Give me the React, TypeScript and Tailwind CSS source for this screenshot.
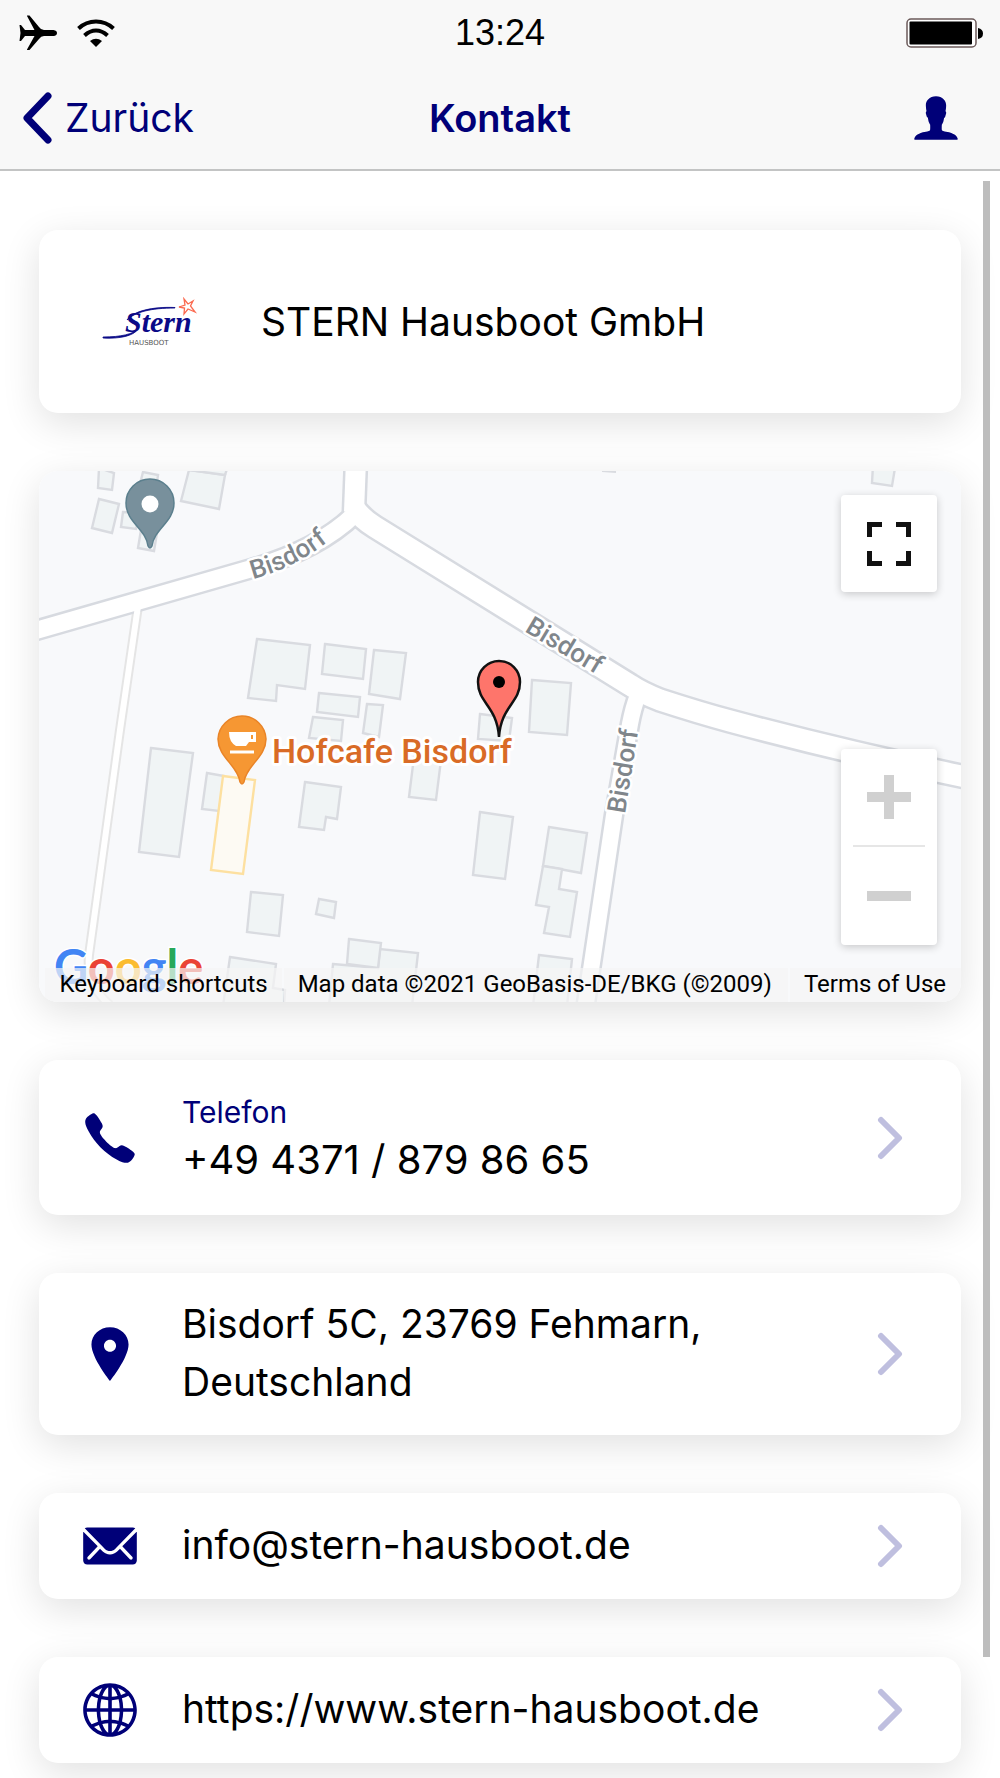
import React from "react";
import { IoIosCall, IoIosGlobe, IoIosMail, IoIosPerson, IoIosPin } from "react-icons/io";

const CARD = "rounded-[19px] bg-white shadow-[0_10px_38px_rgba(0,0,0,0.12)]";

const BUILDINGS = [
  "99,468 114,473 112,490 98,488",
  "99,499 119,504 112,533 92,528",
  "123,512 140,513 136,529 121,527",
  "143,472 158,475 157,482 141,480",
  "141,530 157,533 154,551 138,548",
  "189,470 225,475 219,509 181,501",
  "185,460 228,466 225,475 189,470",
  "257,639 310,645 305,689 277,685 276,701 248,698",
  "325,644 366,649 363,679 322,674",
  "319,693 360,697 358,717 317,712",
  "313,717 343,720 341,741 309,738",
  "374,650 406,653 400,699 369,694",
  "367,704 383,705 379,737 363,733",
  "480,714 512,718 509,741 478,739",
  "532,680 571,683 567,735 529,732",
  "873,465 895,468 892,486 872,483",
  "151,748 193,753 179,857 139,852",
  "207,773 224,776 219,811 202,809",
  "305,782 341,787 337,819 326,817 324,830 299,827",
  "251,892 283,895 279,936 247,932",
  "319,899 336,902 334,918 316,914",
  "230,957 276,964 273,988 285,990 284,1006 223,1006",
  "333,964 378,968 380,949 418,953 412,1006 329,1006",
  "349,939 381,943 378,968 347,964",
  "414,757 441,760 436,800 409,797",
  "480,812 513,817 505,879 473,875",
  "549,827 587,833 581,873 543,866",
  "543,866 562,869 559,889 577,892 570,937 544,933 549,907 536,905",
  "539,955 572,959 567,1006 533,1006",
];

const ROADS = [
  { d: "M20 635L250 569Q318 550 355 514", w: 17 },
  { d: "M356 460L354 512", w: 20 },
  { d: "M354 508Q362 519 375 527L630 685Q642 693 660 700Q700 713 730 721Q845 752 980 780", w: 21 },
  { d: "M638 695Q633 708 630 724L614 815L585 1010", w: 16 },
];

const LANE = "M138 606L120 730L89 955Q86 985 110 1005";

function MapDrawing() {
  return (
    <svg viewBox="39 471 922 531" className="block h-auto w-full" role="img" aria-label="Karte Bisdorf">
      <rect x="39" y="471" width="922" height="532" fill="#f8f9fb" />
      <g fill="#f0f4f5" stroke="#d9dbe0" strokeWidth="2.4">
        {BUILDINGS.map((points) => (
          <polygon key={points} points={points} />
        ))}
      </g>
      <path d="M602 471L616 472" stroke="#d9dbe0" strokeWidth="2" />
      <polygon points="223,776 255,780 243,874 211,870" fill="#fdfaf3" stroke="#fde0a0" strokeWidth="2.4" />
      <path d={LANE} fill="none" stroke="#e5e5e5" strokeWidth="10" />
      <g fill="none" stroke="#d7dae0">
        {ROADS.map((r) => (
          <path key={r.d} d={r.d} strokeWidth={r.w + 5} />
        ))}
      </g>
      <path d={LANE} fill="none" stroke="#fff" strokeWidth="6" />
      <g fill="none" stroke="#fff">
        {ROADS.map((r) => (
          <path key={r.d} d={r.d} strokeWidth={r.w} />
        ))}
      </g>

      <g
        className="font-['Roboto'] text-[26px] font-medium"
        fill="#80868b"
        stroke="#fff"
        strokeWidth="5"
        strokeLinejoin="round"
        paintOrder="stroke"
      >
        <path id="street-curve" d="M253 579Q302 566 342 530" fill="none" stroke="none" />
        <text>
          <textPath href="#street-curve">Bisdorf</textPath>
        </text>
        <text transform="translate(524 631) rotate(31)">Bisdorf</text>
        <text transform="translate(625 814) rotate(-81)">Bisdorf</text>
      </g>

      <path
        d="M150 479A24 24 0 0 0 126 503C126 522 146 529 148 546Q150 550 152 546C154 529 174 522 174 503A24 24 0 0 0 150 479Z"
        fill="#78909c"
        stroke="#5b7f8d"
        strokeWidth="1.5"
      />
      <circle cx="150" cy="504" r="8.5" fill="#fff" />

      <path
        d="M242 716A24 24 0 0 0 218 739C218 757 238 766 240 782Q242 786 244 782C246 766 266 757 266 739A24 24 0 0 0 242 716Z"
        fill="#f69733"
        stroke="#e98427"
        strokeWidth="1.5"
      />
      <path d="M229 732H256V742H249L246 746H236Q229 742 229 732ZM251 735V739H253V735Z" fill="#fff" fillRule="evenodd" />
      <path d="M230 752H254" stroke="#fff" strokeWidth="3" />

      <text
        x="272"
        y="763"
        className="font-['Roboto'] text-[34px] font-medium"
        fill="#d96b26"
        stroke="#fff"
        strokeWidth="6"
        strokeLinejoin="round"
        paintOrder="stroke"
      >
        Hofcafe Bisdorf
      </text>

      <path
        d="M499 661A21 21 0 0 0 478 682C478 703 497 706 499 737C501 706 520 703 520 682A21 21 0 0 0 499 661Z"
        fill="#fe756b"
        stroke="#111"
        strokeWidth="2.5"
      />
      <circle cx="499" cy="682" r="6" fill="#000" />

      <text
        x="54"
        y="984"
        className="font-['Lato'] text-[47px] font-bold"
        stroke="#fff"
        strokeWidth="3"
        paintOrder="stroke"
      >
        <tspan fill="#4285f4">G</tspan>
        <tspan fill="#ea4335">o</tspan>
        <tspan fill="#fbbc30">o</tspan>
        <tspan fill="#4285f4">g</tspan>
        <tspan fill="#27a85a">l</tspan>
        <tspan fill="#ea4335">e</tspan>
      </text>
    </svg>
  );
}

function StatusBar() {
  return (
    <div className="grid h-[66px] grid-cols-[1fr_auto_1fr] items-center px-[17px]">
      <div className="flex items-center gap-5">
        <svg viewBox="0 0 38 36" className="ml-0.5 h-9 w-[38px]" aria-label="Flugmodus">
          <path
            d="M0.500 10H2L6 15H15.500L8 1V0.500H10.500L20 12Q22 15 25 15H34.500Q38 15.500 38 18Q38 20.500 34.500 21H25Q22 21 20 24L10.500 35H8V34.500L15.500 21H6L2 26H0.500L1.500 18Z"
            fill="#000"
          />
        </svg>
        <svg viewBox="0 0 38 28" className="h-7 w-[38px]" aria-label="WLAN">
          <g fill="none" stroke="#000" strokeWidth="4">
            <path d="M1.500 9.500Q9 2.500 19 2.500T36.500 9.500" />
            <path d="M7.500 16.500Q13 11.500 19 11.500T30.500 16.500" />
          </g>
          <path d="M13 22Q19 17.500 25 22L19 28Z" fill="#000" />
        </svg>
      </div>
      <time className="font-['Liberation_Sans'] text-[36px] leading-[44px] text-black">13:24</time>
      <svg viewBox="0 0 77 30" className="h-[30px] w-[77px] justify-self-end" aria-label="Akku voll">
        <rect x="1" y="1" width="69" height="28" rx="4" fill="#fff" stroke="#6b5a5a" strokeWidth="1.500" />
        <rect x="3.500" y="3.500" width="62.500" height="23" rx="1" fill="#000" />
        <path d="M72 10Q77 11 77 15.500T72 21Z" fill="#000" />
      </svg>
    </div>
  );
}

function Chevron() {
  return (
    <svg viewBox="0 0 26 44" className="h-11 w-[26px] shrink-0" aria-hidden="true">
      <path d="M4 4L22 22L4 40" fill="none" stroke="#bfbfdf" strokeWidth="6" strokeLinecap="round" strokeLinejoin="round" />
    </svg>
  );
}

function SternLogo() {
  return (
    <svg viewBox="0 0 98 50" className="h-[50px] w-[98px] shrink-0" aria-label="Stern Hausboot">
      <path
        d="M74 11C50 11 34 15 26 23C32 14 52 9.500 74 10.500ZM2 40C20 40 32 37 37 32C33 39 18 42 2 41Z"
        fill="#0a0a87"
        stroke="#0a0a87"
        strokeWidth="0.8"
      />
      <text x="24" y="35" className="font-['Liberation_Serif'] text-[30px] font-bold italic" fill="#0a0a87">
        Stern
      </text>
      <path
        d="M83 2L87 7L92 4L89.500 9L94 15L87 12L83 17L83.500 11L78 10L84 8Z"
        fill="none"
        stroke="#fb6a50"
        strokeWidth="1.3"
      />
      <text x="28" y="48" className="font-['DejaVu_Sans'] text-[7px]" fill="#555">
        HAUSBOOT
      </text>
    </svg>
  );
}

type RowProps = { icon: React.ReactNode; href: string; label?: string; children: React.ReactNode };

function ContactRow({ icon, href, label, children }: RowProps) {
  return (
    <a href={href} className={`flex items-center py-5 pr-[58px] pl-[35px] ${CARD}`}>
      <span className="flex w-[72px] shrink-0 justify-center text-[#000078]">{icon}</span>
      <span className={label ? "ml-9 block grow pt-[13px] pb-1.5" : "ml-9 block grow pt-0.5 pb-1"}>
        {label && <span className="block text-[30px] leading-[38px] text-[#000078]">{label}</span>}
        <span
          className={
            label
              ? "block text-[40px] leading-[58px] text-black"
              : "block max-w-[600px] text-[39px] leading-[58px] text-black"
          }
        >
          {children}
        </span>
      </span>
      <Chevron />
    </a>
  );
}

export default function App() {
  return (
    <div className="relative min-h-screen overflow-hidden bg-white font-['Inter',sans-serif]">
      <header className="border-b-2 border-[#c3c4c4] bg-[#f8f8f8]">
        <StatusBar />
        <nav className="grid h-[103px] grid-cols-[1fr_auto_1fr] items-center px-[23px] text-[39px] leading-[48px] text-[#000078]">
          <button type="button" className="flex items-center gap-3 justify-self-start">
            <svg viewBox="0 0 30 52" className="h-[52px] w-[30px]" aria-hidden="true">
              <path d="M25 4L4 26L25 48" fill="none" stroke="#000078" strokeWidth="7" strokeLinecap="round" strokeLinejoin="round" />
            </svg>
            Zurück
          </button>
          <h1 className="text-[38px] font-semibold">Kontakt</h1>
          <button type="button" aria-label="Profil" className="mr-3 justify-self-end">
            <IoIosPerson size={58} />
          </button>
        </nav>
      </header>

      <main className="flex flex-col gap-[58px] px-[39px] pt-[59px] pb-[15px]">
        <section className={`flex min-h-[183px] items-center gap-[62px] px-[62px] ${CARD}`}>
          <SternLogo />
          <h2 className="text-[39px] leading-[58px] text-black">STERN Hausboot GmbH</h2>
        </section>

        <section className={`relative overflow-hidden ${CARD}`}>
          <MapDrawing />
          <button
            type="button"
            aria-label="Vollbild"
            className="absolute top-6 right-6 flex h-[97px] w-24 items-center justify-center rounded bg-white shadow-[0_2px_8px_rgba(0,0,0,0.2)]"
          >
            <svg viewBox="0 0 44 44" className="size-11">
              <path
                d="M15 2.500H2.500V15M29 2.500H41.500V15M15 41.500H2.500V29M29 41.500H41.500V29"
                fill="none"
                stroke="#111"
                strokeWidth="5"
              />
            </svg>
          </button>
          <div className="absolute right-6 bottom-[57px] w-24 rounded bg-white shadow-[0_2px_8px_rgba(0,0,0,0.2)]">
            <button type="button" aria-label="Vergrößern" className="flex h-24 w-full items-center justify-center">
              <svg viewBox="0 0 44 44" className="size-11">
                <path d="M22 0V44M0 22H44" stroke="#d0d0d0" strokeWidth="10" />
              </svg>
            </button>
            <div className="mx-3 h-0.5 bg-[#e6e6e6]" />
            <button type="button" aria-label="Verkleinern" className="flex h-[98px] w-full items-center justify-center">
              <svg viewBox="0 0 44 44" className="size-11">
                <path d="M0 22H44" stroke="#d0d0d0" strokeWidth="10" />
              </svg>
            </button>
          </div>
          <div className="absolute right-0 bottom-0 flex gap-0.5 font-['Roboto'] text-[24px] leading-[32px] whitespace-nowrap text-black">
            <button type="button" className="bg-[#f5f5f5]/70 px-[14px] pb-0.5">Keyboard shortcuts</button>
            <span className="bg-[#f5f5f5]/70 pr-4 pb-0.5 pl-[14px]">Map data ©2021 GeoBasis-DE/BKG (©2009)</span>
            <a href="#terms" className="bg-[#f5f5f5]/70 pr-[15px] pb-0.5 pl-[14px]">Terms of Use</a>
          </div>
        </section>

        <ContactRow href="tel:+4943718798665" label="Telefon" icon={<IoIosCall size={66} />}>
          +49 4371 / 879 86 65
        </ContactRow>
        <ContactRow href="#karte" icon={<IoIosPin size={66} />}>
          Bisdorf 5C, 23769 Fehmarn, Deutschland
        </ContactRow>
        <ContactRow href="mailto:info@stern-hausboot.de" icon={<IoIosMail size={66} />}>
          info@stern-hausboot.de
        </ContactRow>
        <ContactRow href="https://www.stern-hausboot.de" icon={<IoIosGlobe size={66} />}>
          https://www.stern-hausboot.de
        </ContactRow>
      </main>

      <div className="absolute top-[181px] right-[10px] bottom-[121px] w-[7px] bg-[#bdbdbd]" />
    </div>
  );
}
